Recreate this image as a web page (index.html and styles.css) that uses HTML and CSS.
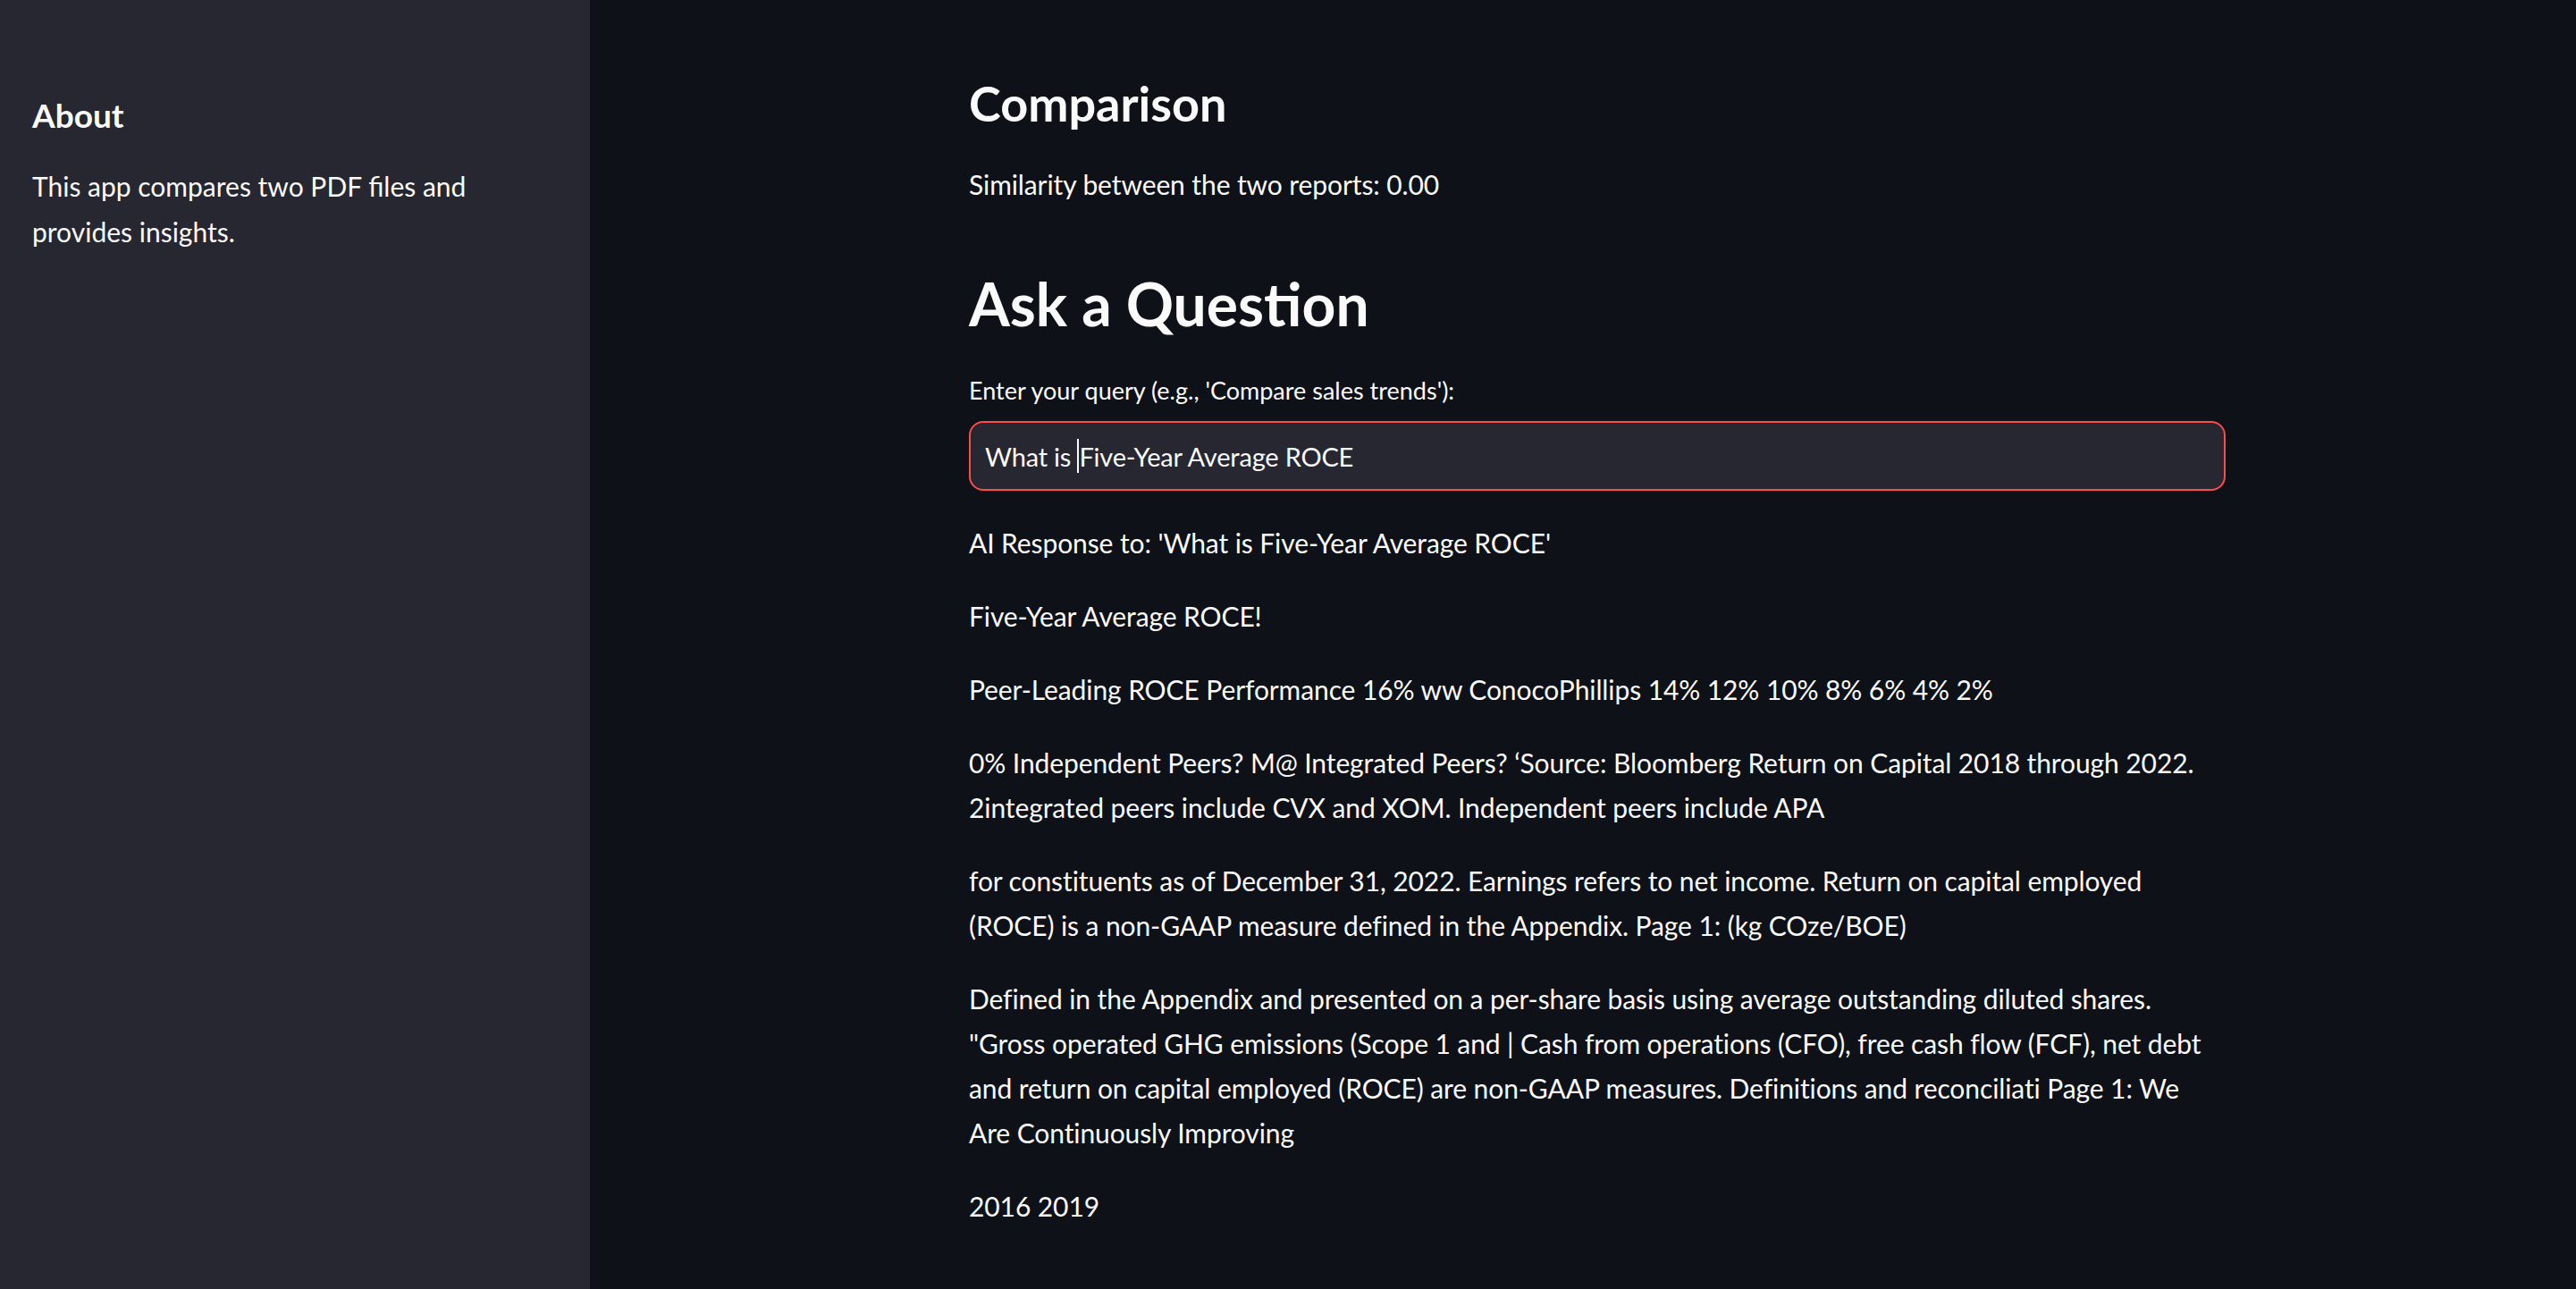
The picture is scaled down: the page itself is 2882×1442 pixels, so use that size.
FILE: index.html
```html
<!DOCTYPE html>
<html lang="en">
<head>
<meta charset="utf-8">
<title>PDF Comparison</title>
<link rel="stylesheet" href="styles.css">
</head>
<body>
<div class="app">
  <aside class="sidebar">
    <h2 class="side-title">About</h2>
    <p class="side-text">This app compares two PDF files and provides insights.</p>
  </aside>
  <main class="main">
    <div class="content">
      <h3 class="subheader">Comparison</h3>
      <p class="text sim">Similarity between the two reports: 0.00</p>
      <h2 class="header">Ask a Question</h2>
      <label class="label">Enter your query (e.g., 'Compare sales trends'):</label>
      <div class="input"><span>What is </span><span class="caret"></span><span>Five-Year Average ROCE</span></div>
      <div class="answer">
        <p class="text">AI Response to: 'What is Five-Year Average ROCE'</p>
        <p class="text">Five-Year Average ROCE!</p>
        <p class="text">Peer-Leading ROCE Performance 16% ww ConocoPhillips 14% 12% 10% 8% 6% 4% 2%</p>
        <p class="text">0% Independent Peers? M@ Integrated Peers? ‘Source: Bloomberg Return on Capital 2018 through 2022. 2integrated peers include CVX and XOM. Independent peers include APA</p>
        <p class="text">for constituents as of December 31, 2022. Earnings refers to net income. Return on capital employed (ROCE) is a non-GAAP measure defined in the Appendix. Page 1: (kg COze/BOE)</p>
        <p class="text">Defined in the Appendix and presented on a per-share basis using average outstanding diluted shares. "Gross operated GHG emissions (Scope 1 and | Cash from operations (CFO), free cash flow (FCF), net debt and return on capital employed (ROCE) are non-GAAP measures. Definitions and reconciliati Page 1: We Are Continuously Improving</p>
        <p class="text">2016 2019</p>
      </div>
    </div>
  </main>
</div>
</body>
</html>
```

FILE: styles.css
```css
html, body {
  margin: 0;
  padding: 0;
  background: #0e1117;
  color: #fafafa;
  font-family: Lato, "Noto Sans", sans-serif;
}

.app {
  display: flex;
  min-height: 1442px;
  height: 1442px;
  overflow: hidden;
}

.sidebar {
  width: 660px;
  flex: 0 0 660px;
  box-sizing: border-box;
  background: #262730;
  padding: 105px 36px 0 36px;
}

.side-title {
  margin: 0;
  font-size: 37px;
  line-height: 48px;
  font-weight: 700;
}

.side-text {
  margin: 30px 0 0 0;
  font-size: 30px;
  line-height: 51px;
}

.main {
  flex: 1;
  padding: 82px 0 0 424px;
}

.content {
  width: 1406px;
}

.subheader {
  margin: 0;
  font-size: 54px;
  line-height: 67px;
  font-weight: 700;
}

.text {
  margin: 0 0 32px 0;
  font-size: 30px;
  letter-spacing: -0.1px;
  line-height: 50px;
}

.sim {
  margin-top: 32px;
  margin-bottom: 0;
}

.header {
  margin: 66px 0 0 0;
  font-size: 66px;
  line-height: 86px;
  font-weight: 700;
}

.label {
  display: block;
  margin-top: 34px;
  font-size: 27px;
  line-height: 40px;
}

.input {
  margin-top: 14px;
  height: 78px;
  box-sizing: border-box;
  border: 2px solid #ff4b4b;
  border-radius: 16px;
  background: #262730;
  padding: 0 16px;
  display: flex;
  align-items: center;
  font-size: 29px;
  letter-spacing: -0.2px;
  white-space: pre;
}

.caret {
  display: inline-block;
  width: 2px;
  height: 38px;
  background: #fafafa;
}

.answer {
  margin-top: 33px;
}
```
